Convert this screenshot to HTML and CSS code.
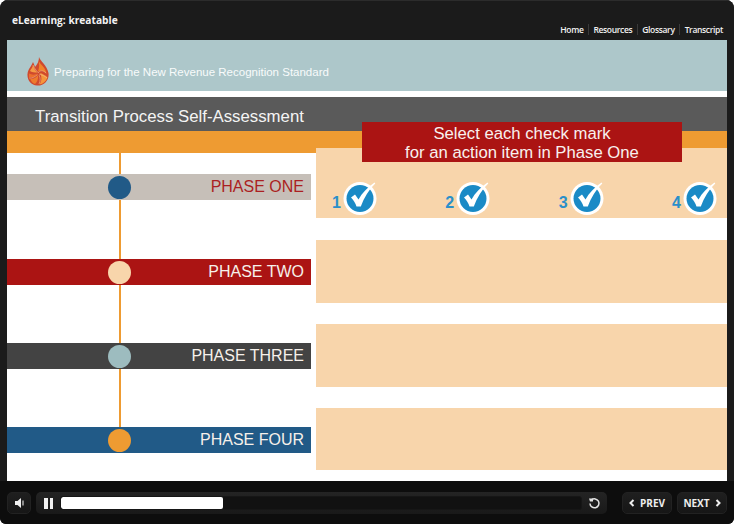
FILE: index.html
```html
<!DOCTYPE html>
<html lang="en">
<head>
    <meta charset="UTF-8">
    <title>eLearning: kreatable</title>
    <link rel="stylesheet" href="styles.css">
</head>
<body>
    <div class="player">
        <header class="topbar">
            <div class="course-title">eLearning: kreatable</div>
            <nav class="links">
                <a>Home</a>
                <a>Resources</a>
                <a>Glossary</a>
                <a>Transcript</a>
            </nav>
        </header>

        <main class="stage">
            <div class="banner">
                <svg class="logo" width="22" height="29" viewBox="0 0 22 29">
                    <path fill="#cf4a2e" d="M12 0C13 4 20 8 21.500 16C22.500 23 17 29 10 28.500C4 28 0 23 0.500 17C1 12 4 10 6 5C7 7 7.500 8.500 8 10C10.500 7 12 4 12 0Z"/>
                    <path fill="#f2842a" d="M11.500 4C14 8 19 11 19.500 17C17 13.500 14 12.500 11 14.500C12.500 10 12.500 7 11.500 4Z"/>
                    <path fill="#f49a45" d="M6 8C7 11 8 14 10.500 15.500C7.500 15.500 4.500 15 3 14C4 12 5.500 10.500 6 8Z"/>
                    <path fill="#ec6f2c" d="M2 16.500C5 18 8 18 10.500 16.500C8.500 20 5 21 2 20Z"/>
                    <path fill="#f5963a" d="M13 16C16 17 19 18.500 20.500 20.500C19 24.500 16 27 12.500 27.500C15 24 15 20 13 16Z"/>
                    <path fill="#ee7a2c" d="M3 21.500C6 22.500 9 21 11 18C11.500 22 10 25.500 8 27C5.500 26.500 4 24 3 21.500Z"/>
                    <path fill="none" stroke="#f4c9a4" stroke-width="0.500" d="M11 15.500C9 13 7 11 6 8M11 16C13 13 16 13 19 16M12 17C15 18 18 19 20 21M12 18C13.500 21 13.500 24 12 27M10.500 17.500C8 20 5 21.500 2 21"/>
                </svg>
                <span class="banner-text">Preparing for the New Revenue Recognition Standard</span>
            </div>

            <h1 class="slide-title">Transition Process Self-Assessment</h1>
            <div class="orange-band"></div>

            <div class="callout">Select each check mark<br>for an action item in Phase One</div>

            <div class="content">
                <div class="phases">
                    <div class="timeline"></div>
                    <div class="phase phase-one"><i class="dot"></i><span>PHASE ONE</span></div>
                    <div class="phase phase-two"><i class="dot"></i><span>PHASE TWO</span></div>
                    <div class="phase phase-three"><i class="dot"></i><span>PHASE THREE</span></div>
                    <div class="phase phase-four"><i class="dot"></i><span>PHASE FOUR</span></div>
                </div>

                <div class="panels">
                    <div class="panel panel-first">
                        <div class="check-item">
                            <span class="num">1</span>
                            <svg class="check" width="35" height="38" viewBox="0 0 35 38"><use href="#check-mark"/></svg>
                        </div>
                        <div class="check-item">
                            <span class="num">2</span>
                            <svg class="check" width="35" height="38" viewBox="0 0 35 38"><use href="#check-mark"/></svg>
                        </div>
                        <div class="check-item">
                            <span class="num">3</span>
                            <svg class="check" width="35" height="38" viewBox="0 0 35 38"><use href="#check-mark"/></svg>
                        </div>
                        <div class="check-item">
                            <span class="num">4</span>
                            <svg class="check" width="35" height="38" viewBox="0 0 35 38"><use href="#check-mark"/></svg>
                        </div>
                    </div>
                    <div class="panel"></div>
                    <div class="panel"></div>
                    <div class="panel panel-last"></div>
                </div>
            </div>
        </main>

        <footer class="controls">
            <button class="ctl volume">
                <svg width="9" height="10" viewBox="0 0 9 10"><path fill="#f0f0f0" d="M0 3H2.500L6 0V10L2.500 7H0Z"/><path fill="#8a8a8a" d="M7 2.500H9V7.500H7Z"/></svg>
            </button>
            <div class="seekbar">
                <span class="pause"><i></i><i></i></span>
                <div class="track"><div class="progress" style="width: 162px"></div></div>
                <svg class="reload" width="13" height="13" viewBox="0 0 13 13"><path fill="none" stroke="#e4e4e4" stroke-width="1.500" d="M3.500 3A4.500 4.500 0 1 1 2 6.500"/><path fill="#e4e4e4" d="M1 1.500H5V4.500H2Z"/></svg>
            </div>
            <button class="ctl nav-btn prev">
                <svg width="6" height="8" viewBox="0 0 6 8"><path fill="none" stroke="#eee" stroke-width="2" d="M4.500 1L1.500 4L4.500 7"/></svg>
                PREV
            </button>
            <button class="ctl nav-btn next">
                NEXT
                <svg width="6" height="8" viewBox="0 0 6 8"><path fill="none" stroke="#eee" stroke-width="2" d="M1.500 1L4.500 4L1.500 7"/></svg>
            </button>
        </footer>
    </div>

    <svg width="0" height="0" class="defs">
        <defs>
            <g id="check-mark">
                <circle cx="17" cy="20.500" r="16.500" fill="#fff"/>
                <circle cx="17" cy="20.500" r="13.500" fill="#1a8ac6"/>
                <path fill="#fff" d="M8 19.500L12 16.500L15.500 21.500C19 15 24.500 9.500 31.500 4.500L32.300 5.500C26 11.500 21 19.500 17.800 28.500H13.500C12.500 25 10.500 22 8 19.500Z"/>
            </g>
        </defs>
    </svg>
</body>
</html>
```

FILE: styles.css
```css
* {
    margin: 0;
    padding: 0;
    box-sizing: border-box;
}

body {
    width: 734px;
    height: 524px;
    overflow: hidden;
    background: #fff;
    font-family: 'Liberation Sans', Arial, sans-serif;
}

.defs {
    position: absolute;
}

.player {
    width: 734px;
    height: 524px;
    display: flex;
    flex-direction: column;
    border-radius: 8px 8px 6px 6px;
    overflow: hidden;
    background: #1b1b1b;
}

/* top bar */
.topbar {
    height: 40px;
    flex: none;
    padding: 0 11px 5px 12px;
    display: flex;
    justify-content: space-between;
    background: #1b1b1b;
    border-top: 1px solid #2c2c2c;
    font-family: 'Open Sans', sans-serif;
    color: #f2f2f2;
}

.course-title {
    font-size: 10.200px;
    font-weight: 700;
    line-height: 12px;
    margin-top: 13px;
}

.links {
    align-self: flex-end;
    display: flex;
    font-size: 8.500px;
    font-weight: 600;
    letter-spacing: -0.350px;
    line-height: 11px;
}

.links a {
    padding: 0 4.500px;
    border-left: 1px solid #3a3a3a;
}

.links a:first-child {
    border-left: none;
}

.links a:last-child {
    padding-right: 0;
}

/* slide */
.stage {
    position: relative;
    height: 441px;
    flex: none;
    margin: 0 7px;
    background: #fff;
}

.banner {
    height: 51px;
    background: #adc7ca;
    display: flex;
    align-items: center;
    padding: 13px 0 0 20px;
    margin-bottom: 6px;
}

.logo {
    margin: -1px 5px 0 0;
}

.banner-text {
    color: #f8fbfb;
    font-size: 11.500px;
}

.slide-title {
    height: 34px;
    background: #5a5a5a;
    color: #f4f4f4;
    font-size: 16.800px;
    font-weight: 400;
    line-height: 40px;
    padding-left: 28px;
}

.orange-band {
    height: 22px;
    background: #ee9b32;
}

.callout {
    position: absolute;
    left: 355px;
    top: 82px;
    width: 320px;
    height: 40px;
    padding-top: 3px;
    background: #ab1413;
    color: #f8f0ee;
    font-size: 16.700px;
    line-height: 18.500px;
    text-align: center;
    z-index: 2;
}

.content {
    display: grid;
    grid-template-columns: 304px 411px;
    column-gap: 5px;
}

.phases {
    position: relative;
    padding-top: 21px;
}

.timeline {
    position: absolute;
    left: 112px;
    top: 0;
    height: 280px;
    width: 2px;
    background: #ee9b32;
}

.phase {
    position: relative;
    height: 26px;
    margin-bottom: 58px;
    display: flex;
    align-items: center;
    justify-content: flex-end;
    padding-right: 7px;
    font-size: 16px;
    color: #f6f0ea;
}

.phase:nth-child(2) {
    margin-bottom: 59px;
}

.dot {
    position: absolute;
    left: 101px;
    top: 2px;
    width: 23px;
    height: 23px;
    border-radius: 50%;
}

.phase-one { background: #c6bfb8; color: #ab1f22; }
.phase-one .dot { background: #215a87; }
.phase-two { background: #ab1413; }
.phase-two .dot { background: #f8d5ab; }
.phase-three { background: #434343; }
.phase-three .dot { background: #9dbcbf; }
.phase-four { background: #215a87; }
.phase-four .dot { background: #ee9b32; }

.panels {
    margin-top: -5px;
    display: flex;
    flex-direction: column;
    gap: 21px;
}

.panel {
    height: 63px;
    background: #f8d5ab;
}

.panel-first {
    height: 70px;
    margin-bottom: 1px;
    padding: 30px 9px 0 16px;
    display: flex;
    justify-content: space-between;
    align-items: flex-start;
}

.panel-last {
    height: 62px;
}

.check-item {
    display: flex;
    align-items: flex-end;
    gap: 2px;
}

.num {
    color: #2a8fc9;
    font-size: 16px;
    font-weight: 700;
    line-height: 18px;
    margin-bottom: 4px;
}

/* bottom controls */
.controls {
    flex: 1;
    display: flex;
    align-items: flex-start;
    padding: 11px 7px 0;
    background: #0d0d0d;
}

.ctl {
    height: 22px;
    border: 1px solid #222;
    border-radius: 5px;
    background: linear-gradient(#1f1f1f, #161616);
    color: #eee;
    display: flex;
    align-items: center;
    justify-content: center;
}

.volume {
    width: 24px;
    margin-right: 5px;
}

.seekbar {
    width: 571px;
    height: 22px;
    margin-right: 15px;
    display: flex;
    align-items: center;
    padding: 0 6px 0 8px;
    border-radius: 5px;
    background: linear-gradient(#242424, #191919);
}

.pause {
    display: flex;
    gap: 2px;
    width: 16px;
}

.pause i {
    width: 3.500px;
    height: 11px;
    background: #f2f2f2;
}

.track {
    width: 523px;
    height: 14px;
    margin-right: 6px;
    border-radius: 3px;
    background: #111;
    overflow: hidden;
    border: 1px solid #161616;
}

.progress {
    height: 12px;
    border-radius: 2px;
    background: #fff;
}

.nav-btn {
    width: 50px;
    gap: 5px;
    font-family: 'Open Sans', sans-serif;
    font-size: 10px;
    font-weight: 700;
}

.prev {
    margin-right: 5px;
}
```
